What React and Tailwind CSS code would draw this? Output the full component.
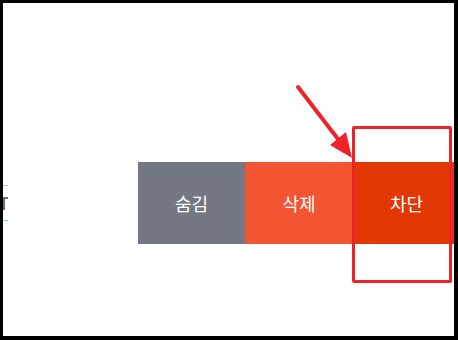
export default function App() {
  return (
    <div className="w-[458px] h-[340px] bg-black pt-[3px] pl-[3px] pr-[4px] pb-[4px]">
      <div
        className="relative w-full h-full overflow-hidden bg-white"
        style={{ fontFamily: '"Noto Sans CJK KR", "Noto Sans", sans-serif' }}
      >
        {/* swiped list row */}
        <div className="flex mt-[159px] h-[82px]">
          {/* clipped remainder of the row content */}
          <div className="w-[135px] shrink-0 flex flex-col pt-[23px]">
            <div className="w-[5px] h-[1px] bg-[#6ee7a0]" />
            <div className="relative h-[34px]">
              <div className="absolute left-0 top-[11px] w-[5px] h-[2px] bg-[#6b6b72]" />
              <div className="absolute left-0 top-[11px] w-[2px] h-[13px] bg-[#6b6b72]" />
            </div>
            <div className="w-[5px] h-[1px] bg-[#6ee7a0]" />
          </div>
          <button className="w-[107px] shrink-0 bg-[#747884] text-white text-[18px] flex items-center justify-center">
            숨김
          </button>
          <button className="w-[108px] shrink-0 bg-[#f35532] text-white text-[18px] flex items-center justify-center">
            삭제
          </button>
          <button className="w-[107px] shrink-0 bg-[#e13805] text-white text-[18px] flex items-center justify-center">
            차단
          </button>
        </div>

        {/* annotation: highlight box */}
        <div className="absolute left-[349px] top-[123px] w-[100px] h-[157px] border-[3px] border-[#ee2229] rounded-[2px]" />

        {/* annotation: arrow */}
        <svg className="absolute left-0 top-0" width="455" height="337" viewBox="0 0 455 337">
          <line x1="295" y1="84" x2="338" y2="140" stroke="#ee2229" strokeWidth="4" strokeLinecap="round" />
          <polygon points="327,142 343,129 349,155" fill="#ee2229" />
        </svg>
      </div>
    </div>
  );
}
